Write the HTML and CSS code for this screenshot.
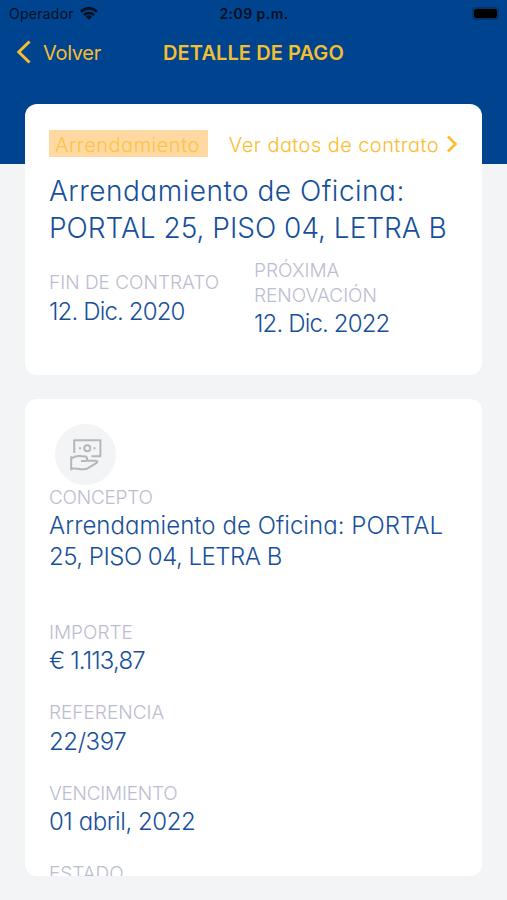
FILE: index.html
```html
<!DOCTYPE html>
<html lang="es">
<head>
<meta charset="utf-8">
<title>Detalle de pago</title>
<link rel="stylesheet" href="styles.css">
</head>
<body>
<div class="screen">
  <div class="status">
    <div class="carrier"><span>Operador</span>
      <svg class="wifi" viewBox="0 0 18 13" width="18" height="13"><g fill="none" stroke="#06101f" stroke-width="2.6"><path d="M1 4.7a11.4 11.4 0 0 1 16 0"/><path d="M4 8a7.2 7.2 0 0 1 10 0"/></g><path d="M9 12.8 5.9 9.8a4.5 4.5 0 0 1 6.2 0z" fill="#06101f"/></svg>
    </div>
    <div class="time">2:09 p.m.</div>
    <div class="power"><span class="battery"></span></div>
  </div>
  <header class="nav">
    <div class="back"><svg viewBox="0 0 16 26" width="16" height="26"><path d="M13.5 2.5 2.8 13 13.5 23.5" fill="none" stroke="#f3bf32" stroke-width="3"/></svg><span>Volver</span></div>
    <h1>DETALLE DE PAGO</h1>
  </header>
  <main>
    <section class="card contract">
      <div class="top-row">
        <span class="tag">Arrendamiento</span>
        <span class="link"><span>Ver datos de contrato</span><svg viewBox="0 0 12 18" width="12" height="18"><path d="M2 1.5 9.5 9 2 16.5" fill="none" stroke="#fbbd2c" stroke-width="2.6"/></svg></span>
      </div>
      <h2><span class="t1">Arrendamiento de Oficina:</span><br><span class="t2">PORTAL 25, PISO 04, LETRA B</span></h2>
      <div class="dates">
        <div class="field"><div class="label fin">FIN DE CONTRATO</div><div class="value date">12. Dic. 2020</div></div>
        <div class="field"><div class="label renew">PRÓXIMA<br>RENOVACIÓN</div><div class="value date">12. Dic. 2022</div></div>
      </div>
    </section>
    <section class="card detail">
      <div class="icon">
        <svg viewBox="0 0 34 34" width="34" height="34" fill="none" stroke="#b5b7b9" stroke-width="2" stroke-linejoin="round"><path d="M5.2 15V2.2h26.2v16H22.5"/><circle cx="18.3" cy="10.2" r="3"/><path d="M10 10.2h2M24.5 10.2h2"/><path d="M2.2 18.2v14M2.2 20.7c3-2.4 5-3 8-2.7l6 .5c2.5.3 2.5 4.2 0 4.5H12M17.5 22.7h9.2c2 0 2 1.6.5 2.5l-8.5 5.2c-2 1.2-4 1-6 .8-3.5-.4-6.5-1.2-10.5-.5"/></svg>
      </div>
      <div class="field concept"><div class="label cap">CONCEPTO</div><div class="value"><span class="c1">Arrendamiento de Oficina: PORTAL</span><br><span class="c2">25, PISO 04, LETRA B</span></div></div>
      <div class="field"><div class="label">IMPORTE</div><div class="value amount">€ 1.113,87</div></div>
      <div class="field"><div class="label">REFERENCIA</div><div class="value ref">22/397</div></div>
      <div class="field"><div class="label cap">VENCIMIENTO</div><div class="value due">01 abril, 2022</div></div>
      <div class="field"><div class="label">ESTADO</div></div>
    </section>
  </main>
</div>
</body>
</html>
```
FILE: styles.css
```css
* { box-sizing: border-box; }
body { margin: 0; font-family: Inter, "Liberation Sans", sans-serif; }
.screen { height: 900px; overflow: hidden; background: linear-gradient(#00438f 164.5px, #f2f4f6 164.5px); }
.status { height: 28px; padding: 0 8px 0 9px; display: grid; grid-template-columns: 1fr auto 1fr; align-items: center; color: #06101f; font-size: 14px; line-height: 28px; }
.carrier { display: flex; align-items: center; gap: 6px; letter-spacing: .25px; }
.wifi { display: block; margin-top: -2px; }
.time { font-weight: 600; letter-spacing: .45px; }
.power { display: flex; justify-content: flex-end; }
.battery { width: 27px; height: 13px; border: 2px solid #05336c; border-radius: 4px; background: #000 padding-box; margin-top: -1px; }
.nav { height: 75.5px; padding: 0 16px; display: grid; grid-template-columns: 1fr auto 1fr; align-items: start; color: #f3bf32; line-height: 50px; font-size: 20px; }
.back { display: flex; align-items: center; gap: 11px; letter-spacing: -.3px; }
.back svg { display: block; margin-top: -2px; }
h1 { margin: 0; font-size: 20px; font-weight: 600; letter-spacing: .1px; }
main { padding: 0 25px; }
.card { background: #fff; border-radius: 12px; overflow: hidden; padding: 26.5px 24px 0; font-weight: 300; font-feature-settings: "cv11"; }
.contract { height: 271px; }
.top-row { display: flex; justify-content: space-between; height: 27px; line-height: 30.5px; font-size: 20px; color: #fbbd2c; }
.tag { width: 159px; background: #ffd9a1; color: #f9c545; padding-left: 6px; letter-spacing: .5px; }
.link { display: flex; align-items: flex-start; gap: 7px; letter-spacing: .43px; }
.link svg { display: block; margin-top: 5px; }
h2 { margin: 16px 0 0; color: #17509a; font-weight: 300; font-size: 28px; line-height: 36.5px; white-space: nowrap; }
.t1 { letter-spacing: .5px; }
.dates { display: grid; grid-template-columns: 205px 1fr; align-items: center; margin-top: 13px; }
.label { color: #bcbcd2; font-size: 19px; line-height: 24.5px; white-space: nowrap; }
.cap { letter-spacing: -.25px; }
.value { color: #17509a; font-size: 24px; line-height: 30.8px; margin-top: 1px; white-space: nowrap; }
.date { letter-spacing: -.85px; }
.c1 { letter-spacing: .05px; }
.c2 { letter-spacing: -.5px; }
.amount { letter-spacing: -.85px; }
.ref { letter-spacing: -.4px; }
.due { letter-spacing: -.45px; }
.detail { height: 477px; margin-top: 24.5px; padding-top: 25px; }
.icon { width: 61px; height: 61px; margin: 0 0 .8px 6px; border-radius: 50%; background: #f2f4f6; display: flex; align-items: center; justify-content: center; }
.detail .field { margin-bottom: 24.2px; }
.detail .concept { margin-bottom: 48px; }
```
